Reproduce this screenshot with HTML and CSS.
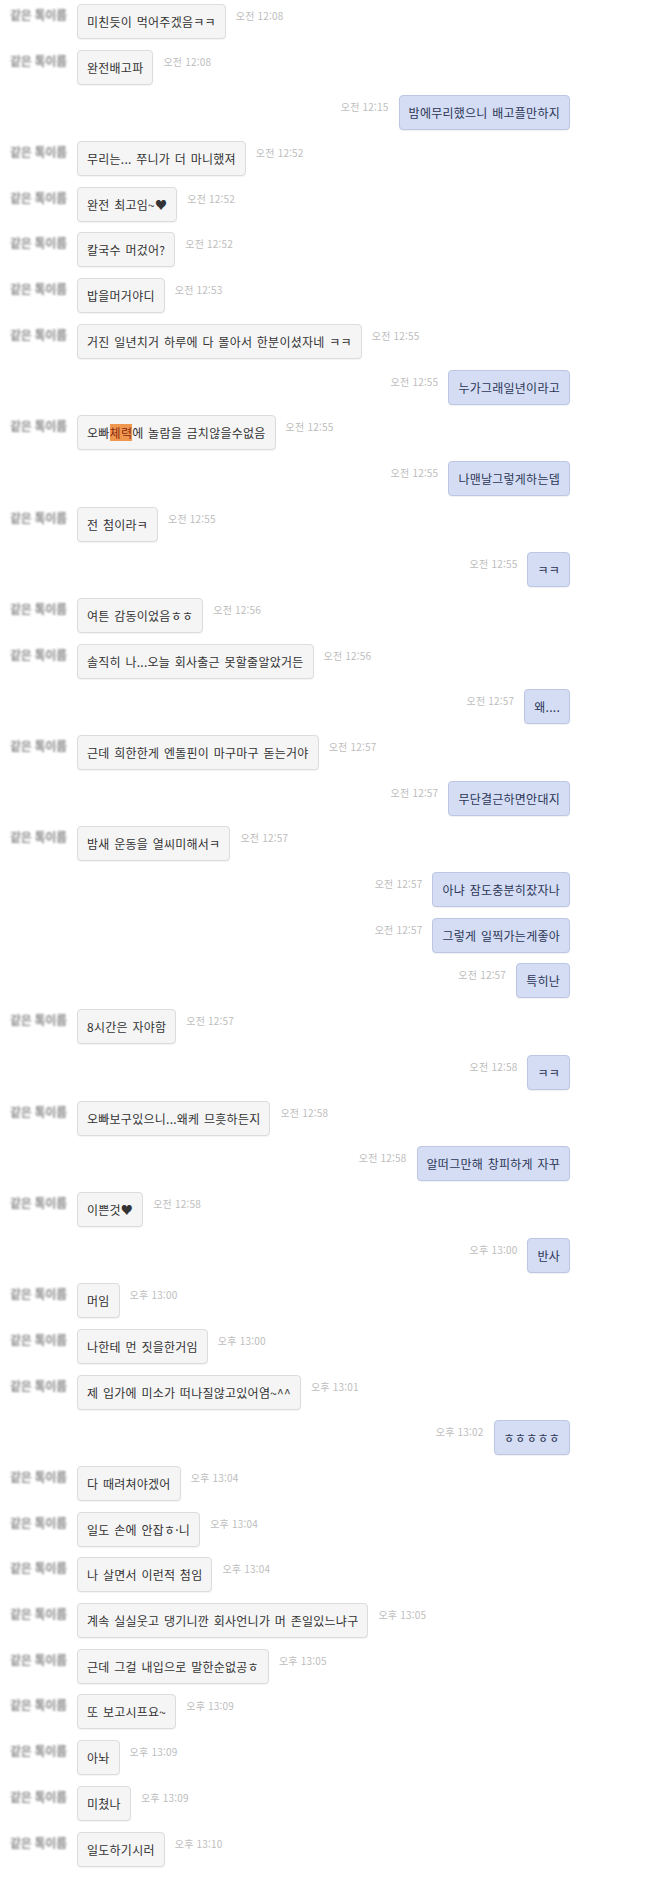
FILE: index.html
```html
<!DOCTYPE html>
<html lang="ko">
<head>
    <meta charset="UTF-8">
    <meta name="viewport" content="width=device-width, initial-scale=1.0">
    <title>대화</title>
    <link rel="stylesheet" href="styles.css">
</head>
<body>

    <div class="chat">
        <div class="msg in"><span class="name">같은 톡이름</span><div class="bubble">미친듯이 먹어주겠음ㅋㅋ</div><span class="time">오전 12:08</span></div>
        <div class="msg in"><span class="name">같은 톡이름</span><div class="bubble">완전배고파</div><span class="time">오전 12:08</span></div>
        <div class="msg out"><span class="time">오전 12:15</span><div class="bubble">밤에무리했으니 배고플만하지</div></div>
        <div class="msg in"><span class="name">같은 톡이름</span><div class="bubble">무리는... 쭈니가 더 마니했져</div><span class="time">오전 12:52</span></div>
        <div class="msg in"><span class="name">같은 톡이름</span><div class="bubble">완전 최고임~♥</div><span class="time">오전 12:52</span></div>
        <div class="msg in"><span class="name">같은 톡이름</span><div class="bubble">칼국수 머겄어?</div><span class="time">오전 12:52</span></div>
        <div class="msg in"><span class="name">같은 톡이름</span><div class="bubble">밥을머거야디</div><span class="time">오전 12:53</span></div>
        <div class="msg in"><span class="name">같은 톡이름</span><div class="bubble">거진 일년치거 하루에 다 몰아서 한분이셨자네 ㅋㅋ</div><span class="time">오전 12:55</span></div>
        <div class="msg out"><span class="time">오전 12:55</span><div class="bubble">누가그래일년이라고</div></div>
        <div class="msg in"><span class="name">같은 톡이름</span><div class="bubble">오빠<span class="hl">체력</span>에 놀람을 금치않을수없음</div><span class="time">오전 12:55</span></div>
        <div class="msg out"><span class="time">오전 12:55</span><div class="bubble">나맨날그렇게하는뎁</div></div>
        <div class="msg in"><span class="name">같은 톡이름</span><div class="bubble">전 첨이라ㅋ</div><span class="time">오전 12:55</span></div>
        <div class="msg out"><span class="time">오전 12:55</span><div class="bubble">ㅋㅋ</div></div>
        <div class="msg in"><span class="name">같은 톡이름</span><div class="bubble">여튼 감동이었음ㅎㅎ</div><span class="time">오전 12:56</span></div>
        <div class="msg in"><span class="name">같은 톡이름</span><div class="bubble">솔직히 나...오늘 회사출근 못할줄알았거든</div><span class="time">오전 12:56</span></div>
        <div class="msg out"><span class="time">오전 12:57</span><div class="bubble">왜....</div></div>
        <div class="msg in"><span class="name">같은 톡이름</span><div class="bubble">근데 희한한게 엔돌핀이 마구마구 돋는거야</div><span class="time">오전 12:57</span></div>
        <div class="msg out"><span class="time">오전 12:57</span><div class="bubble">무단결근하면안대지</div></div>
        <div class="msg in"><span class="name">같은 톡이름</span><div class="bubble">밤새 운동을 열씨미해서ㅋ</div><span class="time">오전 12:57</span></div>
        <div class="msg out"><span class="time">오전 12:57</span><div class="bubble">아냐 잠도충분히잤자나</div></div>
        <div class="msg out"><span class="time">오전 12:57</span><div class="bubble">그렇게 일찍가는게좋아</div></div>
        <div class="msg out"><span class="time">오전 12:57</span><div class="bubble">특히난</div></div>
        <div class="msg in"><span class="name">같은 톡이름</span><div class="bubble">8시간은 자야함</div><span class="time">오전 12:57</span></div>
        <div class="msg out"><span class="time">오전 12:58</span><div class="bubble">ㅋㅋ</div></div>
        <div class="msg in"><span class="name">같은 톡이름</span><div class="bubble">오빠보구있으니...왜케 므흣하든지</div><span class="time">오전 12:58</span></div>
        <div class="msg out"><span class="time">오전 12:58</span><div class="bubble">알떠그만해 창피하게 자꾸</div></div>
        <div class="msg in"><span class="name">같은 톡이름</span><div class="bubble">이쁜것♥</div><span class="time">오전 12:58</span></div>
        <div class="msg out"><span class="time">오후 13:00</span><div class="bubble">반사</div></div>
        <div class="msg in"><span class="name">같은 톡이름</span><div class="bubble">머임</div><span class="time">오후 13:00</span></div>
        <div class="msg in"><span class="name">같은 톡이름</span><div class="bubble">나한테 먼 짓을한거임</div><span class="time">오후 13:00</span></div>
        <div class="msg in"><span class="name">같은 톡이름</span><div class="bubble">제 입가에 미소가 떠나질않고있어염~^^</div><span class="time">오후 13:01</span></div>
        <div class="msg out"><span class="time">오후 13:02</span><div class="bubble">ㅎㅎㅎㅎㅎ</div></div>
        <div class="msg in"><span class="name">같은 톡이름</span><div class="bubble">다 때려쳐야겠어</div><span class="time">오후 13:04</span></div>
        <div class="msg in"><span class="name">같은 톡이름</span><div class="bubble">일도 손에 안잡ㅎ·니</div><span class="time">오후 13:04</span></div>
        <div class="msg in"><span class="name">같은 톡이름</span><div class="bubble">나 살면서 이런적 첨임</div><span class="time">오후 13:04</span></div>
        <div class="msg in"><span class="name">같은 톡이름</span><div class="bubble">계속 실실웃고 댕기니깐 회사언니가 머 존일있느냐구</div><span class="time">오후 13:05</span></div>
        <div class="msg in"><span class="name">같은 톡이름</span><div class="bubble">근데 그걸 내입으로 말한순없공ㅎ</div><span class="time">오후 13:05</span></div>
        <div class="msg in"><span class="name">같은 톡이름</span><div class="bubble">또 보고시프요~</div><span class="time">오후 13:09</span></div>
        <div class="msg in"><span class="name">같은 톡이름</span><div class="bubble">아놔</div><span class="time">오후 13:09</span></div>
        <div class="msg in"><span class="name">같은 톡이름</span><div class="bubble">미쳤나</div><span class="time">오후 13:09</span></div>
        <div class="msg in"><span class="name">같은 톡이름</span><div class="bubble">일도하기시러</div><span class="time">오후 13:10</span></div>
    </div>

</body>
</html>
```

FILE: styles.css
```css
body {
    margin: 0;
    background-color: #ffffff;
    font-family: "Noto Sans CJK KR", "Noto Sans", sans-serif;
}

.chat {
    display: flex;
    flex-direction: column;
    padding: 4px 0 20px;
}

.msg {
    display: flex;
    align-items: flex-start;
    height: 35px;
    margin-bottom: 10.7px;
}

.msg.in {
    padding-left: 10px;
}

.msg.out {
    justify-content: flex-end;
    padding-right: 100px;
}

.name {
    width: 67px;
    flex-shrink: 0;
    margin-top: 3px;
    font-size: 12px;
    font-weight: 700;
    line-height: 15px;
    letter-spacing: -0.3px;
    color: #8c8c8c;
    filter: blur(1.2px);
    white-space: nowrap;
}

.bubble {
    height: 33px;
    line-height: 33px;
    padding: 0 9px;
    font-size: 12px;
    letter-spacing: 0.25px;
    word-spacing: 1px;
    white-space: nowrap;
    border-radius: 4px;
}

.msg.in .bubble {
    background-color: #f5f5f5;
    border: 1px solid #dcdcdc;
    color: #333333;
    box-shadow: 0 1px 1px rgba(0, 0, 0, 0.05);
}

.msg.out .bubble {
    background-color: #d4ddf4;
    border: 1px solid #bcc7e4;
    color: #2c3656;
    box-shadow: 0 1px 1px rgba(0, 0, 0, 0.06);
}

.time {
    margin-top: 5px;
    font-size: 10px;
    line-height: 14px;
    letter-spacing: 0.2px;
    color: #bdbdbd;
    white-space: nowrap;
}

.msg.in .time {
    margin-left: 10px;
}

.msg.out .time {
    margin-right: 10px;
}

.hl {
    background-color: #f0974f;
    color: #8a2a12;
}
```
